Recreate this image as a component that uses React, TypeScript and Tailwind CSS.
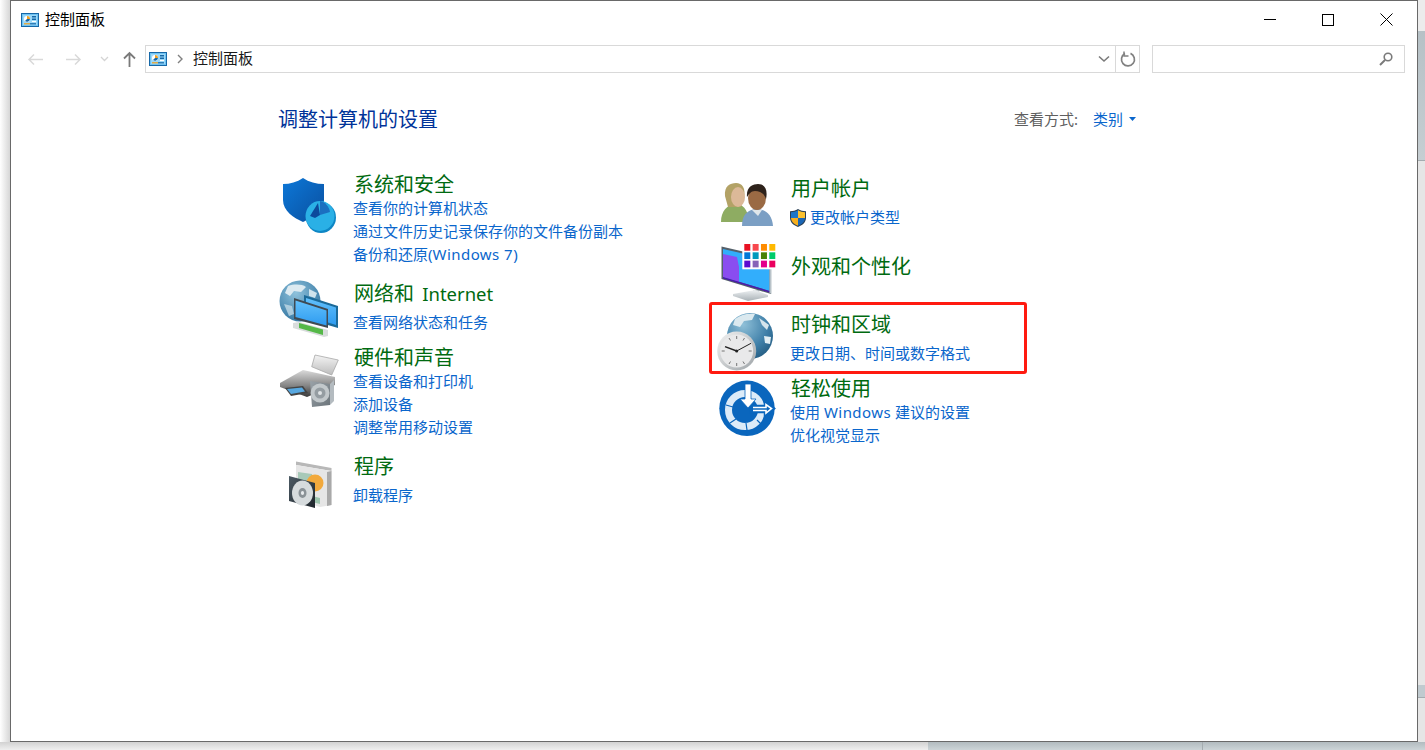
import type { ReactNode } from 'react';

const fontStack = { fontFamily: '"Noto Sans", "Noto Sans CJK SC", sans-serif' };

function PanelIcon() {
    return (
        <svg width="18" height="14" viewBox="0 0 18 14" className="shrink-0">
            <rect x="0.5" y="0.5" width="17" height="13" fill="#6fc3f2" stroke="#1668a8" />
            <rect x="2" y="2" width="14" height="10" fill="#9bd8f8" />
            <circle cx="6" cy="6" r="3" fill="#ffffff" />
            <path d="M6 6V3a3 3 0 0 1 3 3z" fill="#f0a020" />
            <path d="M6 6h3a3 3 0 0 1-5 2z" fill="#1668a8" />
            <rect x="11" y="3" width="4" height="1.5" fill="#1668a8" />
            <rect x="11" y="5.5" width="4" height="1.5" fill="#1668a8" />
            <rect x="11" y="8" width="4" height="1" fill="#ffffff" />
            <rect x="3" y="10.2" width="6" height="1.2" fill="#f0a020" />
            <rect x="9" y="10.2" width="6" height="1.2" fill="#1668a8" />
        </svg>
    );
}

function SecurityIcon() {
    return (
        <svg width="64" height="64" viewBox="0 0 64 64">
            <defs>
                <linearGradient id="sh" x1="0" y1="0" x2="1" y2="1">
                    <stop offset="0" stopColor="#0c78d8" />
                    <stop offset="1" stopColor="#0a4f9f" />
                </linearGradient>
            </defs>
            <path d="M27 6C21 10 14 12 7 12V28C7 39 18 46 27 50C36 46 48 39 48 28V12C40 12 33 10 27 6Z" fill="url(#sh)" />
            <ellipse cx="45" cy="45.5" rx="15" ry="15.5" fill="#0e86c4" />
            <ellipse cx="44" cy="44" rx="14.5" ry="15" fill="#2ab0e6" />
            <path d="M44 29C49 30 53 34 54 40L44 43Z" fill="#1b6fc0" />
            <path d="M44 43L39 46L34 44L42 31Z" fill="#0c4a9c" />
        </svg>
    );
}

function NetworkIcon() {
    return (
        <svg width="64" height="64" viewBox="0 0 64 64">
            <defs>
                <radialGradient id="gl1" cx="0.4" cy="0.3" r="0.8">
                    <stop offset="0" stopColor="#8fc2dc" />
                    <stop offset="1" stopColor="#2b6f9c" />
                </radialGradient>
                <linearGradient id="scr" x1="0" y1="0" x2="0" y2="1">
                    <stop offset="0" stopColor="#62c0fb" />
                    <stop offset="1" stopColor="#2e9bf0" />
                </linearGradient>
            </defs>
            <circle cx="24" cy="25" r="20.5" fill="url(#gl1)" />
            <path d="M12 10C18 8 26 8 30 11L25 16L18 15L14 20L9 17Z" fill="#dceaf1" />
            <path d="M33 13L41 17L39 22L33 20Z" fill="#cfe3ec" />
            <path d="M8 28L16 30L18 38L13 40Z" fill="#cfe3ec" opacity="0.7" />
            <path d="M28 19L62 30V52L28 42Z" fill="#1b6a99" />
            <path d="M30 22L60 31.5V49L30 39.5Z" fill="url(#scr)" />
            <path d="M18 22L52 33V52L18 43Z" fill="#404a52" />
            <path d="M19.5 24.5L50.5 34.5V49.5L19.5 41Z" fill="url(#scr)" />
            <path d="M17 47L23 46L52 54V60L48 61L17 52Z" fill="#d8dcdc" />
            <path d="M23 47L47 53.5V59L23 52Z" fill="#55b848" />
        </svg>
    );
}

function PrinterIcon() {
    return (
        <svg width="64" height="64" viewBox="0 0 64 64">
            <defs>
                <linearGradient id="pr" x1="0" y1="0" x2="0" y2="1">
                    <stop offset="0" stopColor="#dadada" />
                    <stop offset="0.55" stopColor="#8a8a8a" />
                    <stop offset="1" stopColor="#3a3a3a" />
                </linearGradient>
                <linearGradient id="pp" x1="0" y1="0" x2="0" y2="1">
                    <stop offset="0" stopColor="#f4f4f4" />
                    <stop offset="1" stopColor="#bcbcbc" />
                </linearGradient>
                <linearGradient id="spk" x1="0" y1="0" x2="1" y2="1">
                    <stop offset="0" stopColor="#9aa2a8" />
                    <stop offset="1" stopColor="#6b747a" />
                </linearGradient>
            </defs>
            <path d="M35.7 21.7L39 10L62.3 15L55.7 30Z" fill="url(#pp)" stroke="#a8a8a8" strokeWidth="0.8" />
            <path d="M4 38L27 25L59 32V40L31 52L4 42Z" fill="url(#pr)" />
            <path d="M9 43L27 41L32 48L15 51Z" fill="#444444" />
            <path d="M11 44L26 42.5L29 46.5L15 49Z" fill="#58a8e0" />
            <path d="M34 36L54 39V60L36 62Z" fill="url(#spk)" />
            <path d="M54 39L58 35V56L54 60Z" fill="#b4bbc0" />
            <circle cx="44" cy="48" r="9.5" fill="#c2c8cb" />
            <circle cx="44" cy="48" r="5.5" fill="#959da2" />
            <circle cx="44" cy="48" r="2" fill="#dfe3e5" />
        </svg>
    );
}

function ProgramIcon() {
    return (
        <svg width="64" height="64" viewBox="0 0 64 64">
            <defs>
                <linearGradient id="cs" x1="0" y1="0" x2="1" y2="1">
                    <stop offset="0" stopColor="#4c5a64" />
                    <stop offset="1" stopColor="#1e252b" />
                </linearGradient>
            </defs>
            <path d="M20 7.5L55.5 14V17L20 11Z" fill="#b8b8b8" />
            <path d="M20 11L55.5 17V51L44 53L20 46Z" fill="#e6e6e6" />
            <path d="M55.5 17L51 18V52L55.5 51Z" fill="#a9a9a9" />
            <path d="M22 18L36 20V30L22 28Z" fill="#a7c9b8" />
            <path d="M36 42L44 44V50L36 48Z" fill="#9dc4ae" />
            <circle cx="39" cy="29" r="8.5" fill="#f2a93c" />
            <path d="M13 22L39 29V54L13 47Z" fill="url(#cs)" />
            <ellipse cx="26.5" cy="39" rx="10.5" ry="12.5" fill="#d6dbdd" />
            <ellipse cx="26.5" cy="39" rx="4" ry="5" fill="#8a9297" />
            <ellipse cx="26.5" cy="39" rx="1.6" ry="2" fill="#e8ecee" />
        </svg>
    );
}

function UsersIcon() {
    return (
        <svg width="64" height="64" viewBox="0 0 64 64">
            <path d="M6 46C6 35 12 29 20 28C27 28 33 32 34 46Z" fill="#8eac62" />
            <path d="M10 20C9 10 15 7 21 7C27 7 31 12 29 22L26 31L13 31Z" fill="#b3a266" />
            <ellipse cx="23" cy="21" rx="7" ry="10" fill="#dcb998" />
            <path d="M27 50C27 39 32 34 41 33C51 33 57 39 58 50Z" fill="#7b9fc4" />
            <path d="M37 34L43 40L47 34Z" fill="#dfe6ea" />
            <ellipse cx="42" cy="22" rx="9" ry="12" fill="#9a6a44" />
            <path d="M32 21C31 11 38 8 43 8C50 8 53 14 51 23C49 17 45 15 40 15C36 15 34 18 32 21Z" fill="#2e221b" />
        </svg>
    );
}

function UacShield() {
    return (
        <svg width="18" height="20" viewBox="0 0 18 20" className="shrink-0 mr-[3px]">
            <path d="M9 1C6.5 2.5 4 3.2 1 3.2V10C1 14.5 5 17.5 9 19C13 17.5 17 14.5 17 10V3.2C14 3.2 11.5 2.5 9 1Z" fill="#2a3f55" />
            <path d="M9 2.2V10H2V4.2C4.5 4.1 7 3.4 9 2.2Z" fill="#1a75c8" />
            <path d="M9 2.2V10H16V4.2C13.5 4.1 11 3.4 9 2.2Z" fill="#fbc02d" />
            <path d="M2 10H9V17.8C5.5 16.4 2 13.8 2 10Z" fill="#f5ae1e" />
            <path d="M16 10H9V17.8C12.5 16.4 16 13.8 16 10Z" fill="#1a66b5" />
        </svg>
    );
}

const swatches = [
    ['#e81123', '#f7484e', '#ff8c00', '#ffb900'],
    ['#0078d7', '#0099bc', '#498205', '#00cc6a'],
    ['#5c0ccf', '#8764b8', '#e3008c', '#ea005e'],
];

function AppearanceIcon() {
    return (
        <svg width="64" height="64" viewBox="0 0 64 64">
            <defs>
                <linearGradient id="st" x1="0" y1="0" x2="0" y2="1">
                    <stop offset="0" stopColor="#eef1f3" />
                    <stop offset="1" stopColor="#a9b1b6" />
                </linearGradient>
            </defs>
            <path d="M38 50H44L45 55L40 56Z" fill="#c5cbcf" />
            <path d="M18 54L40 50L53 55L53 57L33 61L18 56Z" fill="url(#st)" />
            <path d="M6.5 6.5L56 18V54L6.5 39Z" fill="#55606a" />
            <path d="M8 9L54.5 19.5V51L8 37Z" fill="#32aefc" />
            <path d="M8 14L22 17L24 27L24 42L8 37Z" fill="#8a4df0" />
            <path d="M8 37L54.5 51V52.5L8 38.4Z" fill="#4a18b0" />
            <path d="M54.5 19.5L56.5 19V54L54.5 53Z" fill="#b9c3c9" />
            <rect x="27.3" y="3.3" width="34.4" height="26" fill="#ffffff" />
            {swatches.map((row, r) =>
                row.map((c, i) => (
                    <rect key={c} x={29.3 + i * 8.33} y={4 + r * 8.33} width="6" height="6.7" fill={c} />
                ))
            )}
        </svg>
    );
}

function ClockIcon() {
    return (
        <svg width="64" height="64" viewBox="0 0 64 64">
            <defs>
                <radialGradient id="gl2" cx="0.35" cy="0.25" r="0.9">
                    <stop offset="0" stopColor="#8fc0d8" />
                    <stop offset="0.6" stopColor="#3f7fa8" />
                    <stop offset="1" stopColor="#1d5378" />
                </radialGradient>
                <linearGradient id="ck" x1="0" y1="0" x2="1" y2="1">
                    <stop offset="0" stopColor="#f4f4f4" />
                    <stop offset="1" stopColor="#9da3a7" />
                </linearGradient>
            </defs>
            <circle cx="35" cy="26" r="23" fill="url(#gl2)" />
            <path d="M20 9C26 4 34 3 40 4L37 10L29 11L25 17L18 15Z" fill="#dbe9ef" />
            <path d="M44 8L54 15L52 20L47 15Z" fill="#d5e5ec" />
            <path d="M49 26L56 27L55 34L50 33Z" fill="#e2eef3" />
            <circle cx="21.7" cy="41" r="19.5" fill="url(#ck)" />
            <circle cx="21.7" cy="41" r="16.5" fill="#e9e9ea" />
            <g stroke="#555555" strokeWidth="0.8">
                <path d="M21.7 26V29" />
                <path d="M21.7 53V56" />
                <path d="M6.7 41H9.7" />
                <path d="M33.7 41H36.7" />
                <path d="M14 28L15.5 30.5" />
                <path d="M29.5 28L28 30.5" />
                <path d="M14 54L15.5 51.5" />
                <path d="M29.5 54L28 51.5" />
            </g>
            <path d="M21.7 41L10 36.7" stroke="#222222" strokeWidth="1.4" />
            <path d="M21.7 41L36 33.3" stroke="#222222" strokeWidth="1" />
            <circle cx="21.7" cy="41" r="1.5" fill="#222222" />
        </svg>
    );
}

function EaseIcon() {
    return (
        <svg width="64" height="64" viewBox="0 0 64 64">
            <circle cx="32" cy="32.3" r="27.7" fill="#0a66bd" />
            <circle cx="30" cy="34" r="16.5" fill="none" stroke="#dcebf8" strokeWidth="7" />
            <path d="M11 29L18 31M15 47L21 43M32 54L31 47M47 49L42 44" stroke="#0a66bd" strokeWidth="1.2" />
            <path d="M36 30L50 30V25L59 32.5L50 40V36H36Z" fill="#0a66bd" stroke="#0a66bd" strokeWidth="2.5" />
            <path d="M38 31.5H51V28.5L56.5 32.5L51 37V34.5H38" fill="#0a66bd" stroke="#ffffff" strokeWidth="1.6" />
            <path d="M30 8H36V23H41L33 32L25 23H30Z" fill="#ffffff" stroke="#0a66bd" strokeWidth="0.8" />
        </svg>
    );
}

function Title({ children }: { children: ReactNode }) {
    return <div className="h-[24px] leading-[26px] ml-px text-[20px] text-[#006a10] whitespace-nowrap">{children}</div>;
}

function Link({ children }: { children: ReactNode }) {
    return <div className="h-[23px] leading-[23px] text-[15px] text-[#0a66cc] whitespace-nowrap">{children}</div>;
}

function Category({ icon, iconClass = 'w-[75px]', title, links, className = '', linksClass = '' }: {
    icon: ReactNode;
    iconClass?: string;
    title: ReactNode;
    links: ReactNode[];
    className?: string;
    linksClass?: string;
}) {
    return (
        <div className={`flex items-start ${className}`}>
            <div className={`h-0 shrink-0 ${iconClass}`}>{icon}</div>
            <div>
                <Title>{title}</Title>
                {links.length > 0 && (
                    <div className={linksClass}>
                        {links.map((l, i) => <Link key={i}>{l}</Link>)}
                    </div>
                )}
            </div>
        </div>
    );
}

export default function App() {
    return (
        <div className="w-[1425px] h-[750px] overflow-hidden flex flex-col bg-white" style={fontStack}>
            <div className="flex h-[742px]">
                <div className="w-[10px] bg-gradient-to-r from-white to-[#d6d6d6]" />

                {/* Window */}
                <div className="w-[1408px] h-[742px] border border-[#696969] bg-white flex flex-col">
                    <div className="h-[37px] flex items-center pl-[10px]">
                        <PanelIcon />
                        <span className="ml-[6px] text-[15px] text-black">控制面板</span>
                        <div className="ml-auto flex pr-[2px]">
                            <div className="w-[58px] h-[37px] flex items-center justify-center">
                                <div className="w-[12px] h-px bg-black" />
                            </div>
                            <div className="w-[58px] h-[37px] flex items-center justify-center">
                                <div className="w-[12px] h-[12px] border border-black" />
                            </div>
                            <div className="w-[58px] h-[37px] flex items-center justify-center">
                                <svg width="13" height="13" viewBox="0 0 13 13">
                                    <path d="M0.5 0.5L12.5 12.5M12.5 0.5L0.5 12.5" stroke="#000000" strokeWidth="1" />
                                </svg>
                            </div>
                        </div>
                    </div>

                    {/* Toolbar */}
                    <div className="flex pt-[7px] pl-[5px] items-center">
                        <div className="w-[38px] flex justify-center">
                            <svg width="17" height="13" viewBox="0 0 17 13">
                                <path d="M16 6.5H2M7 1.5L2 6.5L7 11.5" fill="none" stroke="#d9d9d9" strokeWidth="1.5" />
                            </svg>
                        </div>
                        <div className="w-[38px] flex justify-center">
                            <svg width="17" height="13" viewBox="0 0 17 13">
                                <path d="M1 6.5H15M10 1.5L15 6.5L10 11.5" fill="none" stroke="#d9d9d9" strokeWidth="1.5" />
                            </svg>
                        </div>
                        <div className="w-[24px] flex justify-center">
                            <svg width="9" height="6" viewBox="0 0 9 6">
                                <path d="M1 1L4.5 4.5L8 1" fill="none" stroke="#d4d4d4" strokeWidth="1.3" />
                            </svg>
                        </div>
                        <div className="w-[26px] flex justify-center">
                            <svg width="13" height="16" viewBox="0 0 13 16">
                                <path d="M6.5 16V2M1 7.5L6.5 2L12 7.5" fill="none" stroke="#7a7a7a" strokeWidth="1.8" />
                            </svg>
                        </div>
                        <div className="ml-[3px] w-[995px] h-[28px] border border-[#d9d9d9] flex items-center pl-[3px]">
                            <PanelIcon />
                            <svg width="7" height="10" viewBox="0 0 7 10" className="ml-[10px]">
                                <path d="M1 1L5 5L1 9" fill="none" stroke="#808080" strokeWidth="1.4" />
                            </svg>
                            <span className="ml-[9px] -mt-[2px] text-[15px] text-[#1a1a1a]">控制面板</span>
                            <div className="ml-auto w-[22px] h-full flex items-center justify-center">
                                <svg width="12" height="8" viewBox="0 0 12 8">
                                    <path d="M1 1.5L6 6L11 1.5" fill="none" stroke="#7a7a7a" strokeWidth="1.6" />
                                </svg>
                            </div>
                            <div className="w-[24px] h-full border-l border-[#d9d9d9] flex items-center justify-center">
                                <svg width="16" height="16" viewBox="0 0 16 16">
                                    <path d="M5 2.6A6.5 6.5 0 1 0 10.5 2.4" fill="none" stroke="#808080" strokeWidth="1.7" />
                                    <path d="M4 0.5V5H8.5" fill="none" stroke="#808080" strokeWidth="1.5" />
                                </svg>
                            </div>
                        </div>
                        <div className="ml-[12px] w-[253px] h-[28px] border border-[#d9d9d9] flex items-center justify-end pr-[11px]">
                            <svg width="14" height="14" viewBox="0 0 14 14">
                                <circle cx="9" cy="5" r="3.8" fill="none" stroke="#7a7a7a" strokeWidth="1.6" />
                                <path d="M6 8L1 13" stroke="#7a7a7a" strokeWidth="2" />
                            </svg>
                        </div>
                    </div>

                    {/* Content */}
                    <div className="pl-[267px] pt-[32px]">
                        <div className="w-[858px] h-[28px] flex items-center justify-between">
                            <h1 className="mt-[2px] text-[20px] leading-[28px] text-[#003399]">调整计算机的设置</h1>
                            <div className="flex items-center text-[15px]">
                                <span className="text-[#5f5f5f]">查看方式:</span>
                                <span className="ml-[15px] text-[#0a66cc]">类别</span>
                                <svg width="7" height="4" viewBox="0 0 7 4" className="ml-[6px]">
                                    <path d="M0 0H7L3.5 4Z" fill="#0a66cc" />
                                </svg>
                            </div>
                        </div>

                        <div className="mt-[39px] flex items-start">
                            <div className="w-[437px]">
                                <Category
                                    icon={<SecurityIcon />}
                                    iconClass="w-[77px] -ml-[2px]"
                                    title="系统和安全"
                                    linksClass="mt-px"
                                    links={['查看你的计算机状态', '通过文件历史记录保存你的文件备份副本', <>备份和还原(<span className="tracking-[0.45px]">Windows 7</span>)</>]}
                                />
                                <Category
                                    className="mt-[15px]"
                                    icon={<NetworkIcon />}
                                    iconClass="w-[77px] -ml-[2px] -mt-[5px]"
                                    title={<>网络和 <span className="ml-[3px] text-[18.5px]">Internet</span></>}
                                    linksClass="mt-[6px]"
                                    links={['查看网络状态和任务']}
                                />
                                <Category
                                    className="mt-[11px]"
                                    icon={<PrinterIcon />}
                                    iconClass="w-[77px] -ml-[2px]"
                                    title="硬件和声音"
                                    linksClass="mt-px"
                                    links={['查看设备和打印机', '添加设备', '调整常用移动设置']}
                                />
                                <Category
                                    className="mt-[15px]"
                                    icon={<ProgramIcon />}
                                    iconClass="w-[77px] -ml-[2px]"
                                    title="程序"
                                    linksClass="mt-[6px]"
                                    links={['卸载程序']}
                                />
                            </div>

                            <div className="pt-[4px]">
                                <Category
                                    icon={<UsersIcon />}
                                    title="用户帐户"
                                    linksClass="mt-[6px]"
                                    links={[<span key="uac" className="flex items-center -ml-px"><UacShield />更改帐户类型</span>]}
                                />
                                <Category
                                    className="mt-[25px]"
                                    icon={<AppearanceIcon />}
                                    iconClass="w-[75px] -mt-[14px]"
                                    title="外观和个性化"
                                    links={[]}
                                />
                                <div className="relative mt-[34px]">
                                    <div className="absolute left-[-6px] top-[-10px] w-[318px] h-[72px] border-[3px] border-[#ff1a10] rounded-[3px]" />
                                    <Category
                                        icon={<ClockIcon />}
                                        iconClass="w-[75px] -mt-[2px]"
                                        title="时钟和区域"
                                        linksClass="mt-[6px]"
                                        links={['更改日期、时间或数字格式']}
                                    />
                                </div>
                                <Category
                                    className="mt-[11px]"
                                    icon={<EaseIcon />}
                                    title="轻松使用"
                                    linksClass="mt-px"
                                    links={[<>使用 <span className="tracking-[0.45px]">Windows</span> 建议的设置</>, '优化视觉显示']}
                                />
                            </div>
                        </div>
                    </div>
                </div>

                {/* What shows behind the window on the right */}
                <div className="w-[7px] flex flex-col">
                    <div className="h-[31px] bg-[#ececec]" />
                    <div className="h-[130px] bg-gradient-to-b from-[#b6c1c6] to-[#c6ced2] border-b border-[#a4acb0]" />
                    <div className="h-[524px] bg-[#e6e6e6]" />
                    <div className="h-[13px] bg-[#c0cacf] border-b border-[#a4acb0]" />
                    <div className="flex-1 bg-[#e6e6e6]" />
                </div>
            </div>

            {/* Bottom strip behind the window */}
            <div className="h-[8px] flex">
                <div className="w-[928px] bg-gradient-to-b from-[#d2d2d2] to-[#efefef]" />
                <div className="w-[275px] bg-gradient-to-b from-[#b2bbbf] to-[#ccd4d7] border-r border-[#a4acb0]" />
                <div className="flex-1 bg-gradient-to-b from-[#b2bbbf] to-[#ccd4d7]" />
            </div>
        </div>
    );
}
